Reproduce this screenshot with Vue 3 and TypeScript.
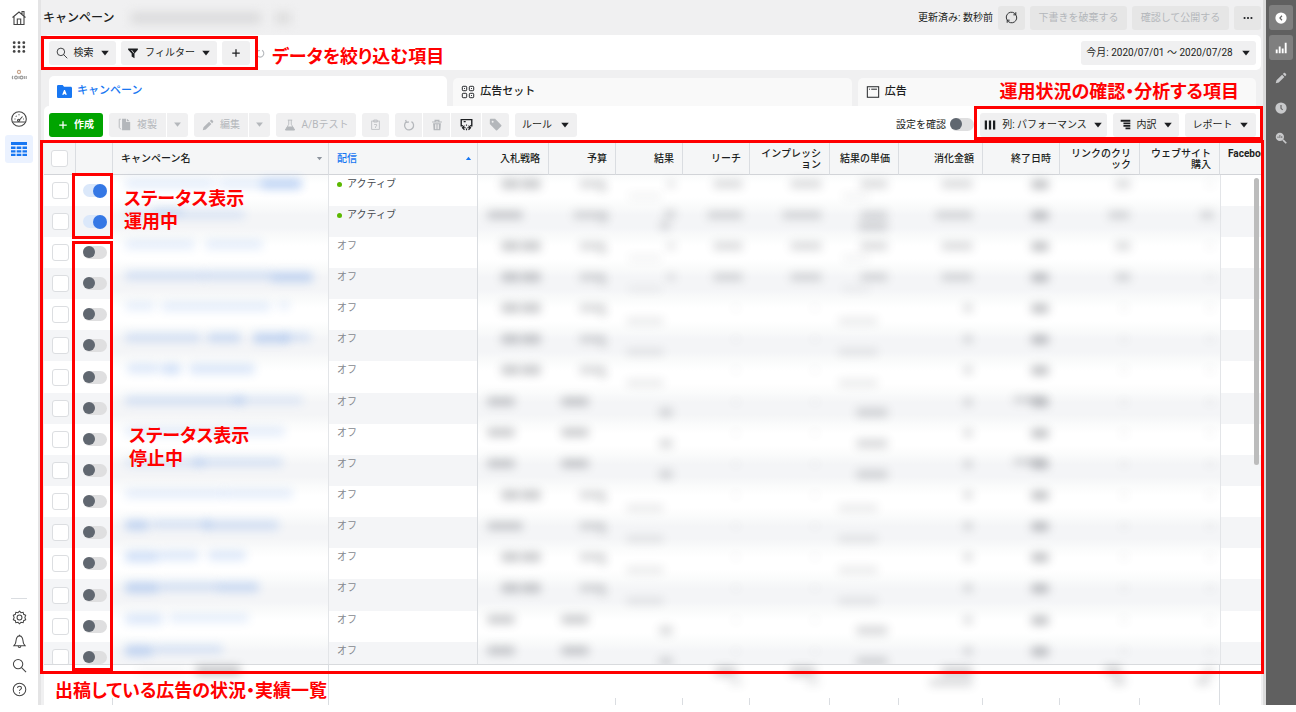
<script setup lang="ts">
import { h, ref } from 'vue'

const icons: Record<string, string> = {
  home: '<path d="M1.500 7.500 8 2l6.500 5.500M3 6.500v8h10v-8M13 6V1.500h-2v2.500"/><path d="M6.300 14.500V9h3.400v5.500"/>',
  grid: '<g fill="currentColor" stroke="none"><circle cx="2.500" cy="3" r="1.600"/><circle cx="8" cy="3" r="1.600"/><circle cx="13.500" cy="3" r="1.600"/><circle cx="2.500" cy="8" r="1.600"/><circle cx="8" cy="8" r="1.600"/><circle cx="13.500" cy="8" r="1.600"/><circle cx="2.500" cy="13" r="1.600"/><circle cx="8" cy="13" r="1.600"/><circle cx="13.500" cy="13" r="1.600"/></g>',
  brand: '<circle cx="8" cy="4" r="1.600" stroke="#c9a58c"/><g stroke="#999"><path d="M2 8Q.6 9.500 2 11"/><circle cx="5" cy="9.500" r="1.400"/><path d="M8 8v3"/><circle cx="10.500" cy="9.500" r="1.400"/><path d="M13.300 8v3M15.200 8v3"/></g>',
  gauge: '<circle cx="8" cy="8" r="7.300"/><path d="M1.500 11h13M8 9.500 11.500 5.500M3.500 8h1M4.800 4.800l.7.7M8 3.200v1M12 8h.8"/><circle cx="7.600" cy="9.300" r="1.100"/>',
  table: '<g fill="currentColor" stroke="none"><path d="M0 1h16v3H0zM0 5.500h4.500v2.500H0zM5.700 5.500h4.600v2.500H5.700zM11.500 5.500H16v2.500h-4.500zM0 9.200h4.500v2.400H0zM5.700 9.200h4.600v2.400H5.700zM11.500 9.200H16v2.400h-4.500zM0 12.800h4.500V15H0zM5.700 12.800h4.600V15H5.700zM11.500 12.800H16V15h-4.500z"/></g>',
  gear: '<path d="M8 1.300 9.600 2.900 11.900 2.400 12.400 4.600 14.600 5.700 13.700 8 14.600 10.300 12.400 11.400 11.900 13.600 9.600 13.100 8 14.700 6.400 13.100 4.100 13.600 3.600 11.400 1.400 10.300 2.300 8 1.400 5.700 3.600 4.600 4.100 2.400 6.400 2.900z"/><circle cx="8" cy="8" r="2.600"/>',
  bell: '<path d="M2 12.500h12l-1.500-2C11.500 8.500 12 5 10.500 3.300 9.800 2.400 9 2 8 2s-1.800.4-2.500 1.300C4 5 4.500 8.500 3.500 10.500zM6.500 12.500c0 2.400 3 2.400 3 0M8 2V.8"/>',
  search: '<circle cx="6.500" cy="6.500" r="5"/><path d="m10.200 10.200 4.800 4.800"/>',
  help: '<circle cx="8" cy="8" r="6.700"/><path d="M5.900 6.500c0-2.800 4.200-2.600 4.200-.2C10.100 8 8 7.800 8 9.600M8 11v1.200"/>',
  funnel: '<path d="M1.500 2h13v1.500L10 8.500V15L6.200 12.500v-4L1.500 3.500z" fill="currentColor" stroke="none"/><path d="m6 4 3.200 4.300" stroke="#f0f0f0"/>',
  plus: '<path d="M8 2v12M2 8h12" stroke-width="2"/>',
  refresh: '<path d="M13.200 4.500A6.200 6.200 0 0 0 2.500 11M2.800 11.500A6.200 6.200 0 0 0 13.500 5M13.300 1.500v3.200h-3M2.700 14.500v-3.200h3"/>',
  dots: '<g fill="currentColor" stroke="none"><circle cx="2.500" cy="8" r="1.700"/><circle cx="8" cy="8" r="1.700"/><circle cx="13.500" cy="8" r="1.700"/></g>',
  folder: '<path d="M0 2.500C0 1.700.5 1 1.400 1H6l1.500 2h7.100c.8 0 1.400.6 1.400 1.400v9.200c0 .8-.6 1.400-1.400 1.400H1.400C.6 15 0 14.400 0 13.600z" fill="#1877f2" stroke="none"/><path d="m5.500 11.500 2-5h1l2 5H9l-1-1.200-1 1.200z" fill="#fff" stroke="none"/>',
  adset: '<rect x="1.500" y="1.500" width="5" height="5" rx="1"/><rect x="9.500" y="1.500" width="5" height="5" rx="1"/><rect x="1.500" y="9.500" width="5" height="5" rx="1"/><rect x="9.500" y="9.500" width="5" height="5" rx="1"/><path d="M3.500 4h1M11.500 4h1M11.500 12h1"/>',
  ad: '<rect x="1.500" y="2" width="13" height="12"/><path d="M3.500 4.800h1M6 4.800h6.500"/>',
  copy: '<path d="M3.500 1.500h-2v10l2 2.500"/><path d="M5 1h5v4h5v10H5zM11 1l3.500 3H11z" fill="currentColor" stroke="none"/>',
  pencil: '<path d="m1 15 1-4 7.500-7.500 3 3L5 14zM10.500 2.500 12 1c1-.8 3.800 2 3 3l-1.500 1.500z" fill="currentColor" stroke="none"/>',
  flask: '<path d="M5 1.500h6M6.300 1.500v5.500L2 14.500h12L9.700 7V1.500"/><path d="M4.500 10.500h7L14 14.500H2z" fill="currentColor"/>',
  paste: '<rect x="2.500" y="3" width="11" height="12"/><path d="M5.500 1.500h5v3h-5zM6 8h3.500v2L8 11.500V13"/>',
  redo: '<path d="M4.500 3.800a6 6 0 1 0 6.800-.3M3.500 1.300 4.600 4.500 7.800 4" stroke-width="1.700"/>',
  trash: '<path d="M1.500 4h13M5.500 4V1.800h5V4" stroke-width="1.600"/><path d="M2.800 5.500h10.400l-.7 9.500h-9z" fill="currentColor" stroke="none"/><path d="M6 7v6.500M8 7v6.500M10 7v6.500" stroke="#f0f0f1"/>',
  preview: '<path d="M3.500 9.500h-2V2h13v7.500h-2M4.500 4.500h2.500" stroke-width="1.700"/><path d="M3 12h4M9 12h4M5.500 9.500 3 12l2.500 2.500M10.500 9.500 13 12l-2.500 2.500M8 8v1.500M8 13v2" stroke-width="1.400"/>',
  tag: '<path d="M1 2.500C1 1.500 1.500 1 2.500 1h5L15 8.500c.6.600.6 1 0 1.600L10.100 15c-.6.600-1 .6-1.600 0L1 7.500z" fill="currentColor" stroke="none"/><circle cx="4.500" cy="4.500" r="1.200" fill="#f0f0f0" stroke="none"/>',
  columns: '<path d="M1 2h3v12H1zM6.500 2h3v12h-3zM12 2h3v12h-3z" fill="currentColor" stroke="none"/>',
  breakdown: '<path d="M1 1h14v3H1zM5 5h10v2.500H5zM5 8.700h10v2.500H5zM8 12.400h7V15H8z" fill="currentColor" stroke="none"/>',
  collapse: '<circle cx="8" cy="8" r="7.500" fill="#fff" stroke="none"/><path d="M9.300 5 6.500 8l2.800 3" stroke="#606060" stroke-width="1.500"/>',
  chart: '<path d="M1 10h2.500v5H1zM5 6h2.500v9H5zM9 8.500h2.500V15H9zM13 1h2.500v14H13z" fill="currentColor" stroke="none"/>',
  clock: '<circle cx="8" cy="8" r="7.500" fill="currentColor" stroke="none"/><path d="M8 4v4.500l2.200 2" stroke="#606060" stroke-width="1.500"/>',
  inspect: '<circle cx="6.500" cy="6.500" r="5.500" fill="currentColor" stroke="none"/><path d="m10.500 10.500 4.500 4.500" stroke-width="2.200"/><path d="M4 8V6M6.500 8V4M9 8V5.500" stroke="#606060"/>',
  caret: '<path d="M2 4.500h12L8 12z" fill="currentColor" stroke="none"/>',
  caretUp: '<path d="M2 11.500h12L8 4z" fill="currentColor" stroke="none"/>',
}

const Icon = (props: { name: string; size?: number }) =>
  h('svg', {
    viewBox: '0 0 16 16',
    width: props.size ?? 12,
    height: props.size ?? 12,
    fill: 'none',
    stroke: 'currentColor',
    'stroke-width': 1.1,
    'aria-hidden': 'true',
    innerHTML: icons[props.name],
  })
Icon.props = ['name', 'size']

const navTop = [
  { icon: 'home', label: 'ホーム' },
  { icon: 'grid', label: 'メニュー' },
  { icon: 'brand', label: 'アカウント' },
]
const navBottom = [
  { icon: 'gear', label: '設定' },
  { icon: 'bell', label: 'お知らせ' },
  { icon: 'search', label: '検索' },
  { icon: 'help', label: 'ヘルプ' },
]
const rail = [
  { icon: 'collapse', label: '閉じる', on: true },
  { icon: 'chart', label: 'グラフ', on: true },
  { icon: 'pencil', label: '編集', on: false },
  { icon: 'clock', label: '履歴', on: false },
  { icon: 'inspect', label: '調査', on: false },
]

const metrics = ['入札戦略', '予算', '結果', 'リーチ', 'インプレッション', '結果の単価', '消化金額', '終了日時', 'リンクのクリック', 'ウェブサイト購入']

// A redacted smudge: distance from the cell's left edge, from its top, width, height, darkness.
type Smudge = [number, number, number, number, number]
type Kind = 'live' | 'off' | 'shared'

const names: Smudge[][] = [
  [[12, 4, 90, 9, 1], [105, 4, 85, 9, 1], [148, 4, 40, 10, 3]],
  [[12, 4, 120, 9, 1], [40, 2, 30, 6, 2]],
  [[12, 3, 70, 9, 1], [92, 3, 58, 9, 1]],
  [[12, 3, 80, 9, 2], [90, 3, 70, 9, 2], [158, 4, 42, 10, 4]],
  [[12, 3, 30, 8, 1], [48, 3, 110, 9, 1], [165, 3, 12, 7, 1]],
  [[12, 3, 76, 9, 2], [94, 3, 34, 9, 3], [140, 3, 36, 10, 4], [170, 3, 28, 8, 2]],
  [[14, 3, 32, 9, 2], [48, 3, 20, 10, 3], [76, 3, 66, 10, 2]],
  [[12, 3, 120, 9, 2], [120, 3, 70, 8, 1]],
  [[12, 3, 160, 9, 1]],
  [[12, 3, 80, 9, 1], [80, 3, 90, 8, 2]],
  [[12, 3, 100, 9, 1], [110, 3, 70, 9, 1]],
  [[12, 3, 24, 10, 4], [38, 3, 60, 8, 2], [90, 3, 76, 10, 2]],
  [[12, 3, 34, 11, 3], [46, 3, 40, 9, 2], [95, 3, 38, 9, 2]],
  [[12, 3, 34, 11, 4], [46, 3, 60, 9, 2], [104, 3, 42, 10, 3]],
  [[12, 3, 38, 10, 2], [56, 3, 80, 8, 1]],
  [[12, 3, 28, 11, 4], [40, 3, 70, 8, 2]],
]

const kindOf = (i: number): Kind => (i < 4 ? 'live' : [7, 8, 9, 14, 15].includes(i) ? 'shared' : 'off')

function smudges(i: number, col: number): Smudge[] {
  const kind = kindOf(i)
  const wide = i === 1
  switch (col) {
    case 0:
      if (kind === 'shared') return [[9, 4, 28, 9, 4]]
      return wide || i === 11 ? [[9, 5, 36, 8, 4]] : [[23, 4, 19, 10, 4], [43, 4, 20, 10, 4]]
    case 1:
      return kind === 'shared' ? [[12, 4, 28, 9, 4]] : [[wide ? 24 : 30, 5, wide ? 36 : 27, 8, 3], [50, 10, 8, 8, 2]]
    case 2:
      if (kind === 'shared') return [[43, 15, 14, 9, 3]]
      if (wide) return [[48, 4, 12, 8, 3], [44, 15, 10, 9, 3]]
      return kind === 'live' ? [[50, 5, 10, 8, 2], [12, 18, 34, 6, 1]] : [[10, 19, 38, 6, 2]]
    case 3:
      return kind === 'live' ? [[wide ? 24 : 30, 5, wide ? 36 : 30, 8, 3]] : [[50, 6, 6, 6, 1]]
    case 4:
      return kind === 'live' ? [[wide ? 32 : 40, 5, wide ? 40 : 32, 8, 3]] : [[62, 6, 6, 6, 1]]
    case 5:
      if (kind === 'shared') return [[26, 15, 32, 9, 3]]
      if (wide) return [[30, 5, 28, 8, 3], [28, 16, 30, 9, 3]]
      return kind === 'live' ? [[30, 5, 28, 8, 3], [12, 18, 28, 6, 1]] : [[8, 19, 40, 6, 2]]
    case 6:
      return kind === 'live' ? [[wide ? 36 : 42, 5, wide ? 38 : 32, 8, 3]] : [[64, 5, 10, 8, 3]]
    case 7:
      return i === 7 || i === 9 ? [[48, 5, 18, 9, 4], [30, 3, 34, 7, 3]] : [[48, 5, 18, 9, 5]]
    case 8:
      return kind === 'live' ? [[wide ? 48 : 55, 5, wide ? 22 : 16, 8, 3]] : [[60, 6, 8, 6, 1]]
    default:
      return wide ? [[60, 5, 14, 8, 3]] : [[66, 6, 8, 6, 1]]
  }
}

const totals: Smudge[][] = [
  [], [], [], [[32, 2, 22, 9, 4], [46, 14, 14, 6, 2]], [[40, 2, 26, 9, 4], [56, 14, 14, 6, 2]], [],
  [[42, 2, 32, 9, 4], [30, 14, 44, 7, 3]], [], [[44, 1, 18, 8, 4], [52, 12, 14, 8, 3]], [[64, 2, 10, 8, 3], [56, 12, 14, 8, 3]],
]

const smudgeStyle = (s: Smudge, blue = false) => ({
  left: s[0] + 'px',
  top: s[1] + 'px',
  width: s[2] + 'px',
  height: s[3] + 'px',
  background: blue ? '#3f7ee0' : '#50545c',
  opacity: blue ? 0.09 + s[4] * 0.05 : s[4] * 0.075,
})

const rows = ref(names.map((name, i) => ({ name, active: i < 2, checked: false, cells: metrics.map((_, c) => smudges(i, c)) })))
const review = ref(false)
const allChecked = ref(false)
</script>

<template>
  <div class="app">
    <nav class="nav" aria-label="メイン">
      <a v-for="n in navTop" :key="n.icon" href="#" class="nav-item" :aria-label="n.label"><Icon :name="n.icon" :size="n.icon === 'grid' ? 14 : 16" /></a>
      <a href="#" class="nav-item spaced" aria-label="概要"><Icon name="gauge" :size="16" /></a>
      <a href="#" class="nav-item current" aria-label="キャンペーン管理"><Icon name="table" :size="16" /></a>
      <div class="nav-bottom">
        <a v-for="n in navBottom" :key="n.icon" href="#" class="nav-item small" :aria-label="n.label"><Icon :name="n.icon" :size="15" /></a>
      </div>
    </nav>

    <main class="main">
      <header class="top">
        <h1>キャンペーン</h1>
        <span class="account"><i></i><i></i></span>
        <span class="updated">更新済み: 数秒前</span>
        <button class="btn dark square" aria-label="更新"><Icon name="refresh" :size="13" /></button>
        <button class="btn dark wide" disabled>下書きを破棄する</button>
        <button class="btn dark wide" disabled>確認して公開する</button>
        <button class="btn dark square" aria-label="その他"><Icon name="dots" :size="10" /></button>
      </header>

      <div class="filters">
        <button class="btn f-search"><Icon name="search" />検索<Icon name="caret" :size="10" /></button>
        <button class="btn f-filter"><Icon name="funnel" />フィルター<Icon name="caret" :size="10" /></button>
        <button class="btn f-add" aria-label="追加"><Icon name="plus" :size="10" /></button>
        <Icon class="reload" name="redo" :size="10" />
        <button class="btn f-date">今月: 2020/07/01 ～ 2020/07/28<Icon name="caret" :size="10" /></button>
      </div>

      <div class="tabs">
        <a href="#" class="tab active"><Icon name="folder" :size="15" />キャンペーン</a>
        <a href="#" class="tab"><Icon name="adset" :size="14" />広告セット</a>
        <a href="#" class="tab"><Icon name="ad" :size="14" />広告</a>
      </div>

      <section class="panel">
        <div class="toolbar">
          <button class="btn create"><Icon name="plus" :size="10" />作成</button>
          <div class="group">
            <button class="btn t-copy" disabled><Icon name="copy" :size="13" />複製</button>
            <button class="btn t-caret" disabled aria-label="複製メニュー"><Icon name="caret" :size="9" /></button>
          </div>
          <div class="group">
            <button class="btn t-copy edit" disabled><Icon name="pencil" />編集</button>
            <button class="btn t-caret" disabled aria-label="編集メニュー"><Icon name="caret" :size="9" /></button>
          </div>
          <button class="btn t-ab" disabled><Icon name="flask" />A/Bテスト</button>
          <button class="btn square" disabled aria-label="貼り付け"><Icon name="paste" :size="11" /></button>
          <div class="group">
            <button class="btn square" disabled aria-label="元に戻す"><Icon name="redo" /></button>
            <button class="btn square" disabled aria-label="削除"><Icon name="trash" /></button>
            <button class="btn t-preview" aria-label="プレビュー"><Icon name="preview" :size="13" /></button>
            <button class="btn square" disabled aria-label="タグ"><Icon name="tag" :size="13" /></button>
          </div>
          <button class="btn t-rule">ルール<Icon name="caret" :size="10" /></button>
          <label class="review">設定を確認<input v-model="review" type="checkbox" role="switch" class="toggle" /></label>
          <button class="btn t-columns"><Icon name="columns" />列: パフォーマンス<Icon name="caret" :size="10" /></button>
          <button class="btn t-break"><Icon name="breakdown" :size="11" />内訳<Icon name="caret" :size="10" /></button>
          <button class="btn t-report">レポート<Icon name="caret" :size="10" /></button>
        </div>

        <div class="viewport">
          <table>
            <colgroup>
              <col class="c-check" /><col class="c-toggle" /><col /><col class="c-delivery" />
              <col v-for="(m, i) in metrics" :key="m" :class="'c-m' + i" /><col class="c-last" />
            </colgroup>
            <thead>
              <tr>
                <th><input v-model="allChecked" type="checkbox" class="check" aria-label="すべて選択" /></th>
                <th></th>
                <th class="left"><span class="sort">キャンペーン名<Icon name="caret" :size="7" /></span></th>
                <th class="left delivery-head"><span class="sort">配信<Icon name="caretUp" :size="7" /></span></th>
                <th v-for="m in metrics" :key="m" class="metric">{{ m }}</th>
                <th class="left facebook">Facebook</th>
              </tr>
            </thead>
            <tbody>
              <tr v-for="(r, i) in rows" :key="i">
                <td><input v-model="r.checked" type="checkbox" class="check" :aria-label="`行${i + 1}を選択`" /></td>
                <td><input v-model="r.active" type="checkbox" role="switch" class="toggle" :aria-label="`行${i + 1}の配信`" /></td>
                <td class="hazy name"><div class="smudges"><i v-for="(s, k) in r.name" :key="k" :style="smudgeStyle(s, true)"></i></div></td>
                <td class="delivery"><span :class="['state', { on: i < 2 }]">{{ i < 2 ? 'アクティブ' : 'オフ' }}</span></td>
                <td v-for="(c, k) in r.cells" :key="k" class="hazy"><div class="smudges"><i v-for="(s, j) in c" :key="j" :style="smudgeStyle(s)"></i></div></td>
                <td class="last"></td>
              </tr>
            </tbody>
          </table>
          <div class="thumb"></div>
        </div>

        <table class="totals">
          <colgroup>
            <col class="c-check" /><col class="c-toggle" /><col /><col class="c-delivery" />
            <col v-for="(m, i) in metrics" :key="m" :class="'c-m' + i" /><col class="c-last" />
          </colgroup>
          <tbody>
            <tr>
              <td></td>
              <td class="tick"></td>
              <td class="rule"><div class="smudges"><i :style="smudgeStyle([24, 3, 50, 7, 1])"></i><i :style="smudgeStyle([82, 1, 46, 9, 5])"></i></div></td>
              <td></td>
              <td v-for="(c, k) in totals" :key="k" :class="k === 9 ? 'rule' : k ? 'tick' : ''"><div class="smudges"><i v-for="(s, j) in c" :key="j" :style="smudgeStyle(s)"></i></div></td>
              <td></td>
            </tr>
          </tbody>
        </table>
      </section>
    </main>

    <aside class="rail">
      <button v-for="r in rail" :key="r.icon" :class="{ on: r.on }" :aria-label="r.label"><Icon :name="r.icon" :size="12" /></button>
    </aside>

    <div class="frame frame-filter"></div>
    <div class="frame frame-report"></div>
    <div class="frame frame-table"></div>
    <div class="frame frame-live"></div>
    <div class="frame frame-stopped"></div>
    <p class="note note-filter">データを絞り込む項目</p>
    <p class="note note-report">運用状況の確認・分析する項目</p>
    <p class="note note-live">ステータス表示<br />運用中</p>
    <p class="note note-stopped">ステータス表示<br />停止中</p>
    <p class="note note-table">出稿している広告の状況・実績一覧</p>
  </div>
</template>

<style>
body { margin: 0; background: #fff; }
</style>

<style scoped>
* { box-sizing: border-box; }
.app {
  position: relative;
  display: flex;
  height: calc(100vh - 7px);
  min-height: 480px;
  overflow: hidden;
  font: 10px/12px Roboto, "Noto Sans CJK JP", sans-serif;
  color: #1c1e21;
}
svg { flex: none; display: block; }
button { font: inherit; color: inherit; border: 0; cursor: pointer; }
a { color: inherit; text-decoration: none; }

.nav {
  flex: none;
  width: 38px;
  padding: 4px 5px;
  display: flex;
  flex-direction: column;
  gap: 1px;
  color: #444;
}
.nav-item { flex: none; height: 28px; display: grid; place-items: center; border-radius: 3px; }
.nav-item.spaced { margin-top: 14px; }
.nav-item.current { background: #ebf2ff; color: #1877f2; margin-top: 1px; }
.nav-item.small { height: 24px; }
.nav-bottom { margin: auto 6px 0; padding-top: 6px; border-top: 1px solid #dadde1; }

.main {
  flex: 1;
  min-width: 0;
  display: flex;
  flex-direction: column;
  padding: 0 2px 0 3px;
  background: #f0f0f1;
  border-left: 3px solid #e4e4e5;
  border-right: 3px solid #dcdcdc;
}
.top { height: 35px; display: flex; align-items: center; gap: 5px; }
h1 { margin: 0 12px 0 -1px; font-size: 12px; font-weight: 500; line-height: 16px; }
.account { display: flex; gap: 14px; filter: blur(5px); }
.account i { width: 130px; height: 12px; background: #dcdcdd; }
.account i + i { width: 16px; background: #dedede; }
.updated { margin-left: auto; }
.btn {
  flex: none;
  height: 24px;
  padding: 0;
  display: inline-flex;
  align-items: center;
  justify-content: center;
  gap: 6px;
  background: #f0f0f1;
  border-radius: 3px;
  white-space: nowrap;
}
.btn:disabled { color: #b4b7bb; cursor: default; }
.btn.dark { background: #e6e6e6; }
.square { width: 27px; }
.wide { width: 97px; }

.filters {
  height: 35px;
  display: flex;
  align-items: center;
  gap: 5px;
  padding: 0 5px;
  background: #fff;
  border-radius: 5px;
}
.f-search { width: 67px; }
.f-filter { width: 96px; }
.f-add { width: 28px; }
.reload { color: #b4b7bb; }
.f-date { width: 175px; margin-left: auto; gap: 8px; }

.tabs { display: flex; gap: 6px; margin-top: 6px; padding: 0 5px; }
.tab {
  flex: 1;
  height: 28px;
  margin-top: 2px;
  padding: 0 8px;
  display: flex;
  align-items: center;
  gap: 5px;
  background: #f9f9f9;
  border-radius: 5px 5px 0 0;
  font-size: 11px;
  font-weight: 500;
}
.tab.active { margin-top: 0; height: 30px; background: #fff; color: #1877f2; }

.panel {
  flex: 1;
  min-height: 0;
  display: flex;
  flex-direction: column;
  background: #fff;
  border-radius: 5px 0 0 0;
}
.toolbar { height: 37px; flex: none; display: flex; align-items: center; gap: 6px; padding: 0 5px; }
.group { display: flex; gap: 1px; }
.group .btn { border-radius: 0; }
.group .btn:first-child { border-radius: 3px 0 0 3px; }
.group .btn:last-child { border-radius: 0 3px 3px 0; }
.create { width: 54px; background: #00a400; color: #fff; font-weight: 700; }
.t-copy { width: 57px; }
.t-copy.edit { width: 54px; }
.t-caret { width: 21px; }
.t-ab { width: 80px; }
.t-preview { width: 30px; }
.t-rule { width: 62px; gap: 8px; }
.review { margin-left: auto; display: flex; align-items: center; gap: 4px; }
.t-columns { width: 127px; }
.t-break { width: 66px; }
.t-report { width: 71px; }

.toggle {
  appearance: none;
  display: block;
  width: 24px;
  height: 13px;
  margin: 0;
  border-radius: 7px;
  background: #dfdfe0;
  cursor: pointer;
}
.toggle::before {
  content: "";
  display: block;
  width: 12px;
  height: 12px;
  border-radius: 50%;
  background: #606770;
}
.toggle:checked { background: #dbe8fa; }
.toggle:checked::before { width: 14px; height: 14px; margin-left: 10px; background: #3578e5; }
.check {
  appearance: none;
  display: block;
  width: 17px;
  height: 17px;
  margin: 0 auto;
  background: #fff;
  border: 1px solid #dcdee1;
  border-radius: 3px;
  cursor: pointer;
}
.check:checked { background: #1877f2; }

.viewport { flex: 1; min-height: 0; position: relative; overflow: hidden; border-bottom: 1px solid #d8dadd; }
table { width: 100%; table-layout: fixed; border-collapse: separate; border-spacing: 0; }
.c-check { width: 32px; }
.c-toggle { width: 37px; }
.c-delivery { width: 149px; }
.c-m0 { width: 71px; }
.c-m1, .c-m2, .c-m3 { width: 67px; }
.c-m4, .c-m8, .c-m9 { width: 80px; }
.c-m5 { width: 69px; }
.c-m6 { width: 84px; }
.c-m7 { width: 77px; }
.c-last { width: 41px; }
th {
  height: 32px;
  padding: 0 8px;
  background: #f5f6f7;
  border-right: 1px solid #dadde1;
  border-bottom: 1px solid #d2d4d8;
  font-weight: 500;
  line-height: 11px;
  text-align: right;
  vertical-align: middle;
}
th:first-child, td:first-child { padding: 0; }
th.left { text-align: left; }
th.metric { word-break: break-all; }
th.facebook { vertical-align: top; padding-top: 5px; overflow: hidden; font-weight: 700; border-right: 0; }
.sort { display: flex; justify-content: space-between; align-items: center; color: inherit; }
.sort svg { color: #8d949e; margin-right: -3px; }
.delivery-head, .delivery-head .sort svg { color: #1877f2; }
td { height: 31px; padding: 0; vertical-align: middle; }
tbody tr:nth-child(7n) td { height: 32px; }
tbody tr:nth-child(even) td { background: #f4f5f7; }
tbody td .toggle { margin-left: 7px; }
td.hazy { vertical-align: top; background: linear-gradient(#fafbfb, #fff 30%, #fff 70%, #fafbfb); }
tbody tr:nth-child(even) td.hazy { background: linear-gradient(#fafbfb, #f4f5f7 30%, #f4f5f7 70%, #fafbfb); }
td.name { border-right: 1px solid #e3e5e8; }
td.delivery { vertical-align: top; padding: 3px 8px; border-right: 1px solid #dadde1; }
td.last { border-left: 1px solid #e3e5e8; }
.state { display: flex; align-items: center; gap: 5px; color: #85898f; }
.state.on { color: #444950; }
.state.on::before { content: ""; width: 5px; height: 5px; border-radius: 50%; background: #5bb800; }
.smudges { position: relative; height: 0; }
.smudges i { position: absolute; border-radius: 4px; filter: blur(5px); }
.thumb { position: absolute; top: 35px; right: 2px; width: 5px; height: 287px; border-radius: 3px; background: #bcbcbc; }

.totals { flex: none; }
.totals td { height: 40px; vertical-align: top; }
.totals td.rule { border-right: 1px solid #dadde1; }
.totals td.tick { background: linear-gradient(#dadde1, #dadde1) right bottom / 1px 7px no-repeat; }

.rail { flex: none; width: 30px; padding: 5px 3px; display: flex; flex-direction: column; gap: 5px; background: #606060; }
.rail button { width: 24px; height: 25px; padding: 0; display: grid; place-items: center; border-radius: 3px; background: none; color: #c8c9cb; }
.rail button.on { background: #7f7f7f; color: #fff; }

.frame { position: absolute; border: 3px solid #f00; pointer-events: none; }
.frame-filter { left: 41px; top: 36px; width: 217px; height: 34px; }
.frame-report { right: 33px; top: 106px; width: 289px; height: 34px; }
.frame-table { left: 40px; right: 32px; top: 140px; bottom: 31px; }
.frame-live { left: 72px; top: 173px; width: 41px; height: 66px; }
.frame-stopped { left: 72px; top: 241px; width: 41px; bottom: 34px; }
.note {
  position: absolute;
  margin: 0;
  color: #f00;
  font: 700 18px/23px Roboto, "Noto Sans CJK JP", sans-serif;
  font-feature-settings: "palt";
  white-space: nowrap;
  pointer-events: none;
}
.note-filter { left: 272px; top: 45px; }
.note-report { right: 57px; top: 80px; }
.note-live { left: 124px; top: 187px; }
.note-stopped { left: 129px; top: 424px; }
.note-table { left: 55px; bottom: 3px; }
</style>
